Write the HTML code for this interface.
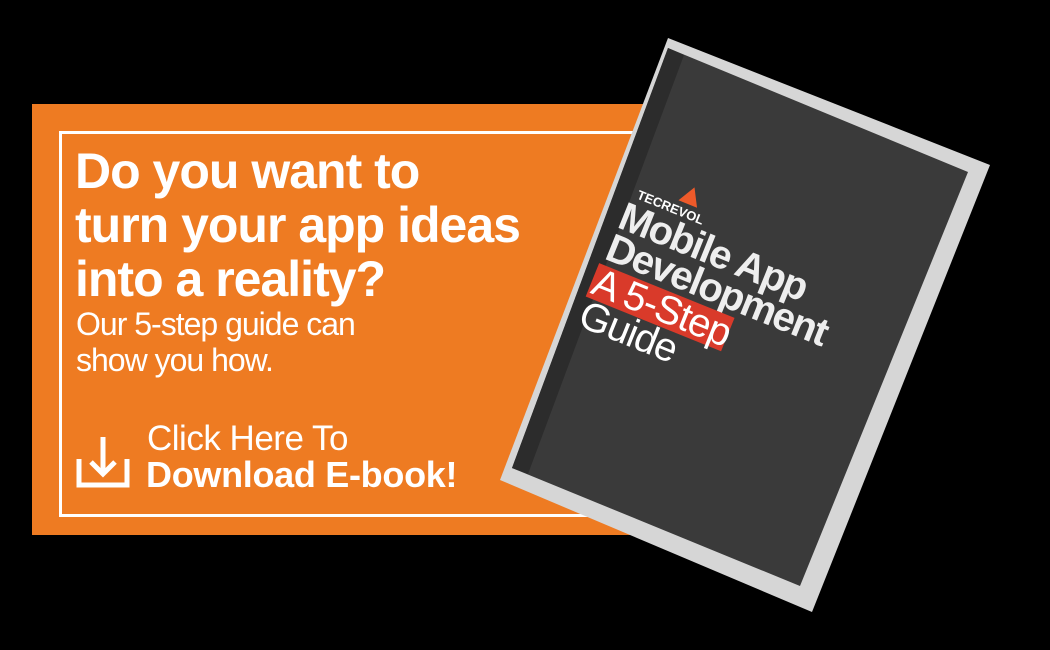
<!DOCTYPE html>
<html><head><meta charset="utf-8"><style>
html,body{margin:0;padding:0;background:#000;}
body{width:1050px;height:650px;position:relative;overflow:hidden;font-family:"Liberation Sans",sans-serif;}
.org{position:absolute;left:32px;top:104px;width:615px;height:431px;background:#EE7B22;}
.brd{position:absolute;left:59px;top:131px;width:600px;height:380px;border:3px solid #fff;border-right:none;}
.t{position:absolute;color:#fff;white-space:nowrap;}
.h{left:75px;font-size:50px;font-weight:bold;letter-spacing:-1px;line-height:54px;top:144px;}
.s{left:76px;font-size:32px;letter-spacing:-1px;line-height:36px;top:306px;}
.c1{left:147px;top:419px;font-size:35px;letter-spacing:-0.5px;}
.c2{left:146px;top:454px;font-size:36px;font-weight:bold;letter-spacing:-0.3px;}
</style></head><body>
<div class="org"></div>
<div class="brd"></div>
<div class="t h">Do you want to<br>turn your app ideas<br>into a reality?</div>
<div class="t s">Our 5-step guide can<br>show you how.</div>
<svg style="position:absolute;left:76px;top:433px" width="56" height="56" viewBox="0 0 56 56">
<path d="M3 26 V52 H51 V26" fill="none" stroke="#fff" stroke-width="5"/>
<path d="M27 4 V40 M15 29 L27 41 L39 29" fill="none" stroke="#fff" stroke-width="5"/>
</svg>
<div class="t c1">Click Here To</div>
<div class="t c2">Download E-book!</div>
<svg style="position:absolute;left:0;top:0" width="1050" height="650">
<polygon points="668,38 990,165 812,612 500,480" fill="#d6d6d6"/>
<polygon points="668,48 968,172 800,586 512,468" fill="#3a3a3a"/>
<polygon points="668,48 684,55 528,474 512,468" fill="#2c2c2c"/>
<g transform="translate(622,212) rotate(22)">
<polygon points="58,-50 68,-32 48,-32" fill="#EE5A2A"/>
<text x="8" y="-18" font-size="13" font-weight="bold" fill="#fff" font-family="Liberation Sans,sans-serif">TECREVOL</text>
<text x="0" y="16" font-size="40" font-weight="bold" fill="#eee" letter-spacing="-1.5">Mobile App</text>
<text x="0" y="50" font-size="40" font-weight="bold" fill="#eee" letter-spacing="-1.5">Development</text>
<rect x="-2" y="56" width="146" height="36" fill="#D93A2A"/>
<text x="0" y="87" font-size="40" fill="#fff" letter-spacing="-1">A 5-Step</text>
<text x="0" y="122" font-size="40" fill="#fff" letter-spacing="-1">Guide</text>
</g>
</svg>
</body></html>
